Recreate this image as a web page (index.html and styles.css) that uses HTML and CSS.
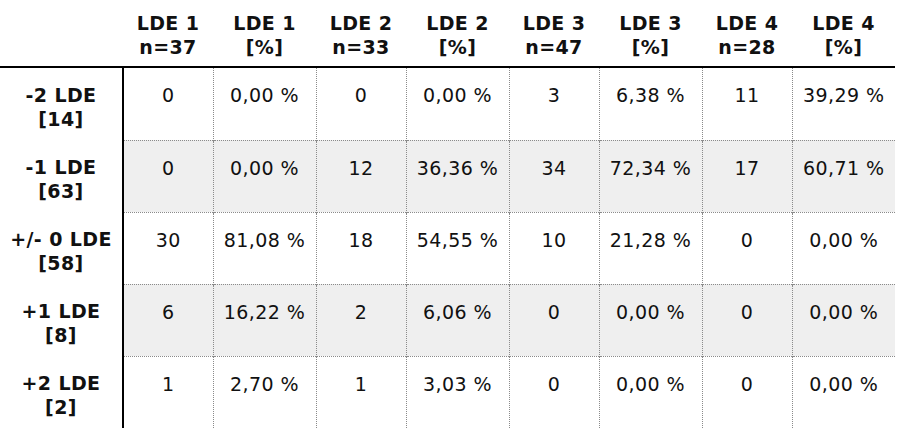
FILE: index.html
```html
<!DOCTYPE html>
<html lang="de">
<head>
    <meta charset="UTF-8">
    <meta name="viewport" content="width=device-width, initial-scale=1.0">
    <title>LDE Verteilung</title>
    <link rel="stylesheet" href="styles.css">
</head>
<body>

<table class="lde-table">
    <colgroup>
        <col class="col-label">
        <col class="col-n"><col class="col-pct">
        <col class="col-n"><col class="col-pct">
        <col class="col-n"><col class="col-pct">
        <col class="col-n"><col class="col-pct">
    </colgroup>
    <thead>
        <tr>
            <th class="corner"></th>
            <th>LDE 1<br>n=37</th>
            <th>LDE 1<br>[%]</th>
            <th>LDE 2<br>n=33</th>
            <th>LDE 2<br>[%]</th>
            <th>LDE 3<br>n=47</th>
            <th>LDE 3<br>[%]</th>
            <th>LDE 4<br>n=28</th>
            <th>LDE 4<br>[%]</th>
        </tr>
    </thead>
    <tbody>
        <tr>
            <th class="row-label">-2 LDE<br>[14]</th>
            <td>0</td><td>0,00 %</td>
            <td>0</td><td>0,00 %</td>
            <td>3</td><td>6,38 %</td>
            <td>11</td><td>39,29 %</td>
        </tr>
        <tr class="shaded">
            <th class="row-label">-1 LDE<br>[63]</th>
            <td>0</td><td>0,00 %</td>
            <td>12</td><td>36,36 %</td>
            <td>34</td><td>72,34 %</td>
            <td>17</td><td>60,71 %</td>
        </tr>
        <tr>
            <th class="row-label">+/- 0 LDE<br>[58]</th>
            <td>30</td><td>81,08 %</td>
            <td>18</td><td>54,55 %</td>
            <td>10</td><td>21,28 %</td>
            <td>0</td><td>0,00 %</td>
        </tr>
        <tr class="shaded">
            <th class="row-label">+1 LDE<br>[8]</th>
            <td>6</td><td>16,22 %</td>
            <td>2</td><td>6,06 %</td>
            <td>0</td><td>0,00 %</td>
            <td>0</td><td>0,00 %</td>
        </tr>
        <tr>
            <th class="row-label">+2 LDE<br>[2]</th>
            <td>1</td><td>2,70 %</td>
            <td>1</td><td>3,03 %</td>
            <td>0</td><td>0,00 %</td>
            <td>0</td><td>0,00 %</td>
        </tr>
    </tbody>
</table>

</body>
</html>
```

FILE: styles.css
```css
body {
    margin: 0;
    padding: 0;
    background: #fff;
    font-family: "DejaVu Sans", "Liberation Sans", sans-serif;
    color: #111;
}

.lde-table {
    width: 895px;
    table-layout: fixed;
    border-collapse: collapse;
    font-size: 19px;
    letter-spacing: 0.4px;
    line-height: 24px;
}

.col-label { width: 123px; }
.col-n { width: 90px; }
.col-pct { width: 103px; }

.lde-table th,
.lde-table td {
    padding: 0;
    text-align: center;
    vertical-align: top;
}

.lde-table thead th {
    height: 48px;
    padding: 11px 0 7px;
    font-weight: bold;
    border-bottom: 2px solid #000;
}

.lde-table tbody tr {
    height: 72px;
}

.lde-table tbody th,
.lde-table tbody td {
    padding: 15px 0 9px;
}

.row-label {
    font-weight: bold;
    border-right: 2px solid #000;
}

.lde-table tbody td {
    font-weight: normal;
    border-left: 1px dotted #8a8a8a;
}

.lde-table tbody tr + tr td {
    border-top: 1px dotted #8a8a8a;
}

.shaded td {
    background-color: #efefef;
}
```
